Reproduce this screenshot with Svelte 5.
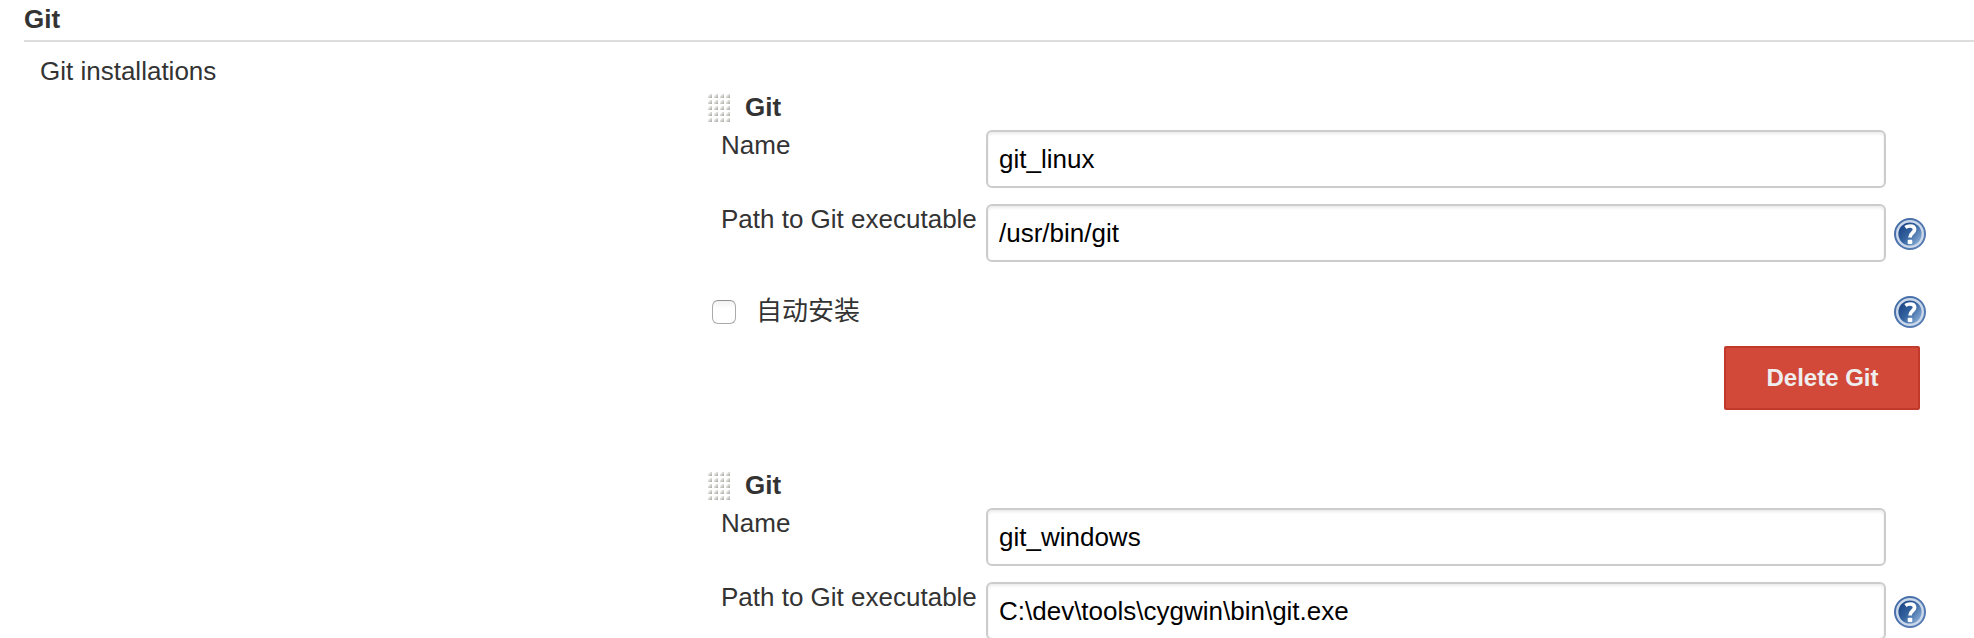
<script>
  let tools = $state([
    { name: 'git_linux', path: '/usr/bin/git', auto: false, expanded: true },
    { name: 'git_windows', path: 'C:\\dev\\tools\\cygwin\\bin\\git.exe', auto: false, expanded: false }
  ]);
  const rows = [0, 1, 2, 3, 4];
  const cols = [0, 1, 2, 3];
</script>

{#snippet help()}
  <svg class="help" viewBox="0 0 32 32" role="img" aria-label="Help">
    <defs>
      <linearGradient id="ball" x1="0.1" y1="0.2" x2="0.9" y2="0.85">
        <stop offset="0" stop-color="#1d4587" />
        <stop offset="0.45" stop-color="#34639f" />
        <stop offset="1" stop-color="#8db0d8" />
      </linearGradient>
      <linearGradient id="rim" x1="0" y1="0" x2="1" y2="1">
        <stop offset="0" stop-color="#416aa6" />
        <stop offset="1" stop-color="#5b80b6" />
      </linearGradient>
    </defs>
    <circle cx="16" cy="16" r="16" fill="url(#rim)" />
    <circle cx="16" cy="16" r="12.8" fill="url(#ball)" stroke="#cbd8ea" stroke-width="2.4" />
    <path d="M11.4 9.5C13 8.3 14.5 8 16.1 8C19.2 8 20.6 9.5 20.6 11.5C20.6 14.8 16 15.2 16 19.4" fill="none" stroke="#fff" stroke-width="3.7" />
    <rect x="13.7" y="21.7" width="4.6" height="4.3" rx="1" fill="#fff" />
  </svg>
{/snippet}

<section class="page">
  <h2>Git</h2>
  <div class="setting">
    <div class="caption">Git installations</div>
    <div class="list">
      {#each tools as tool}
        <article>
          <header>
            <svg class="handle" viewBox="0 0 22 28" aria-hidden="true">
              <defs>
                <linearGradient id="grip" x1="0" y1="0" x2="1" y2="1">
                  <stop offset="0.2" stop-color="#f4f4f2" />
                  <stop offset="1" stop-color="#a3a39e" />
                </linearGradient>
              </defs>
              {#each rows as r}
                {#each cols as c}
                  <path d="M{c * 6} {r * 6 + 2}L{c * 6 + 2} {r * 6}H{c * 6 + 4}V{r * 6 + 4}H{c * 6}Z" fill="url(#grip)" />
                {/each}
              {/each}
            </svg>
            <strong>Git</strong>
          </header>
          <div class="field">
            <span class="label">Name</span>
            <input type="text" aria-label="Name" bind:value={tool.name} />
          </div>
          <div class="field">
            <span class="label">Path to Git executable</span>
            <input type="text" aria-label="Path" bind:value={tool.path} />
            {@render help()}
          </div>
          {#if tool.expanded}
            <div class="auto">
              <label><input type="checkbox" bind:checked={tool.auto} /><span>自动安装</span></label>
              {@render help()}
            </div>
            <footer><button type="button">Delete Git</button></footer>
          {/if}
        </article>
      {/each}
    </div>
  </div>
</section>

<style>
  :global(body) {
    margin: 0;
    background: #fff;
  }
  .page {
    box-sizing: border-box;
    height: 638px;
    overflow: hidden;
    padding-left: 24px;
    color: #333;
    font: 26px/30px "Liberation Sans", "Noto Sans CJK SC", sans-serif;
  }
  h2 {
    box-sizing: border-box;
    height: 42px;
    margin: 0;
    padding-top: 4px;
    border-bottom: 2px solid #ddd;
    font-size: 26px;
    line-height: 30px;
  }
  .setting {
    display: grid;
    grid-template-columns: 684px 1218px;
  }
  .caption {
    padding: 14px 0 0 16px;
  }
  .list {
    padding-top: 50px;
  }
  article {
    height: 378px;
  }
  header {
    display: flex;
    height: 38px;
  }
  .handle {
    width: 22px;
    height: 28px;
    margin: 2px 15px 0 0;
  }
  .field {
    display: flex;
    height: 58px;
    margin-bottom: 16px;
    padding-left: 13px;
  }
  .label {
    width: 265px;
    white-space: nowrap;
  }
  input[type="text"] {
    box-sizing: border-box;
    width: 900px;
    height: 58px;
    margin: 0;
    padding: 0 11px;
    border: 2px solid #ccc;
    border-radius: 6px;
    outline: 0;
    background: #fff;
    box-shadow: inset 0 2px 3px rgba(0, 0, 0, 0.08);
    color: #000;
    font: inherit;
  }
  .help {
    flex: none;
    width: 32px;
    height: 32px;
    margin: 14px 0 0 8px;
  }
  .auto {
    display: flex;
    justify-content: space-between;
    height: 64px;
    padding-left: 4px;
  }
  .auto label {
    display: flex;
    padding-top: 18px;
  }
  .auto label span {
    line-height: 30px;
  }
  .auto .help {
    margin-top: 18px;
  }
  input[type="checkbox"] {
    appearance: none;
    box-sizing: border-box;
    width: 24px;
    height: 24px;
    margin: 4px 20px 0 0;
    border: 1px solid #aaa;
    border-top-color: #909090;
    border-radius: 6px;
    background: linear-gradient(#f2f2f2, #fff 35%);
  }
  footer {
    display: flex;
    justify-content: flex-end;
    padding: 4px 6px 0 0;
  }
  button {
    box-sizing: border-box;
    width: 196px;
    height: 64px;
    padding: 0 0 0 1px;
    border: 2px solid #c0392b;
    border-radius: 2px;
    background: #d24939;
    color: #eee;
    font: bold 24px/28px "Liberation Sans", sans-serif;
  }
</style>
